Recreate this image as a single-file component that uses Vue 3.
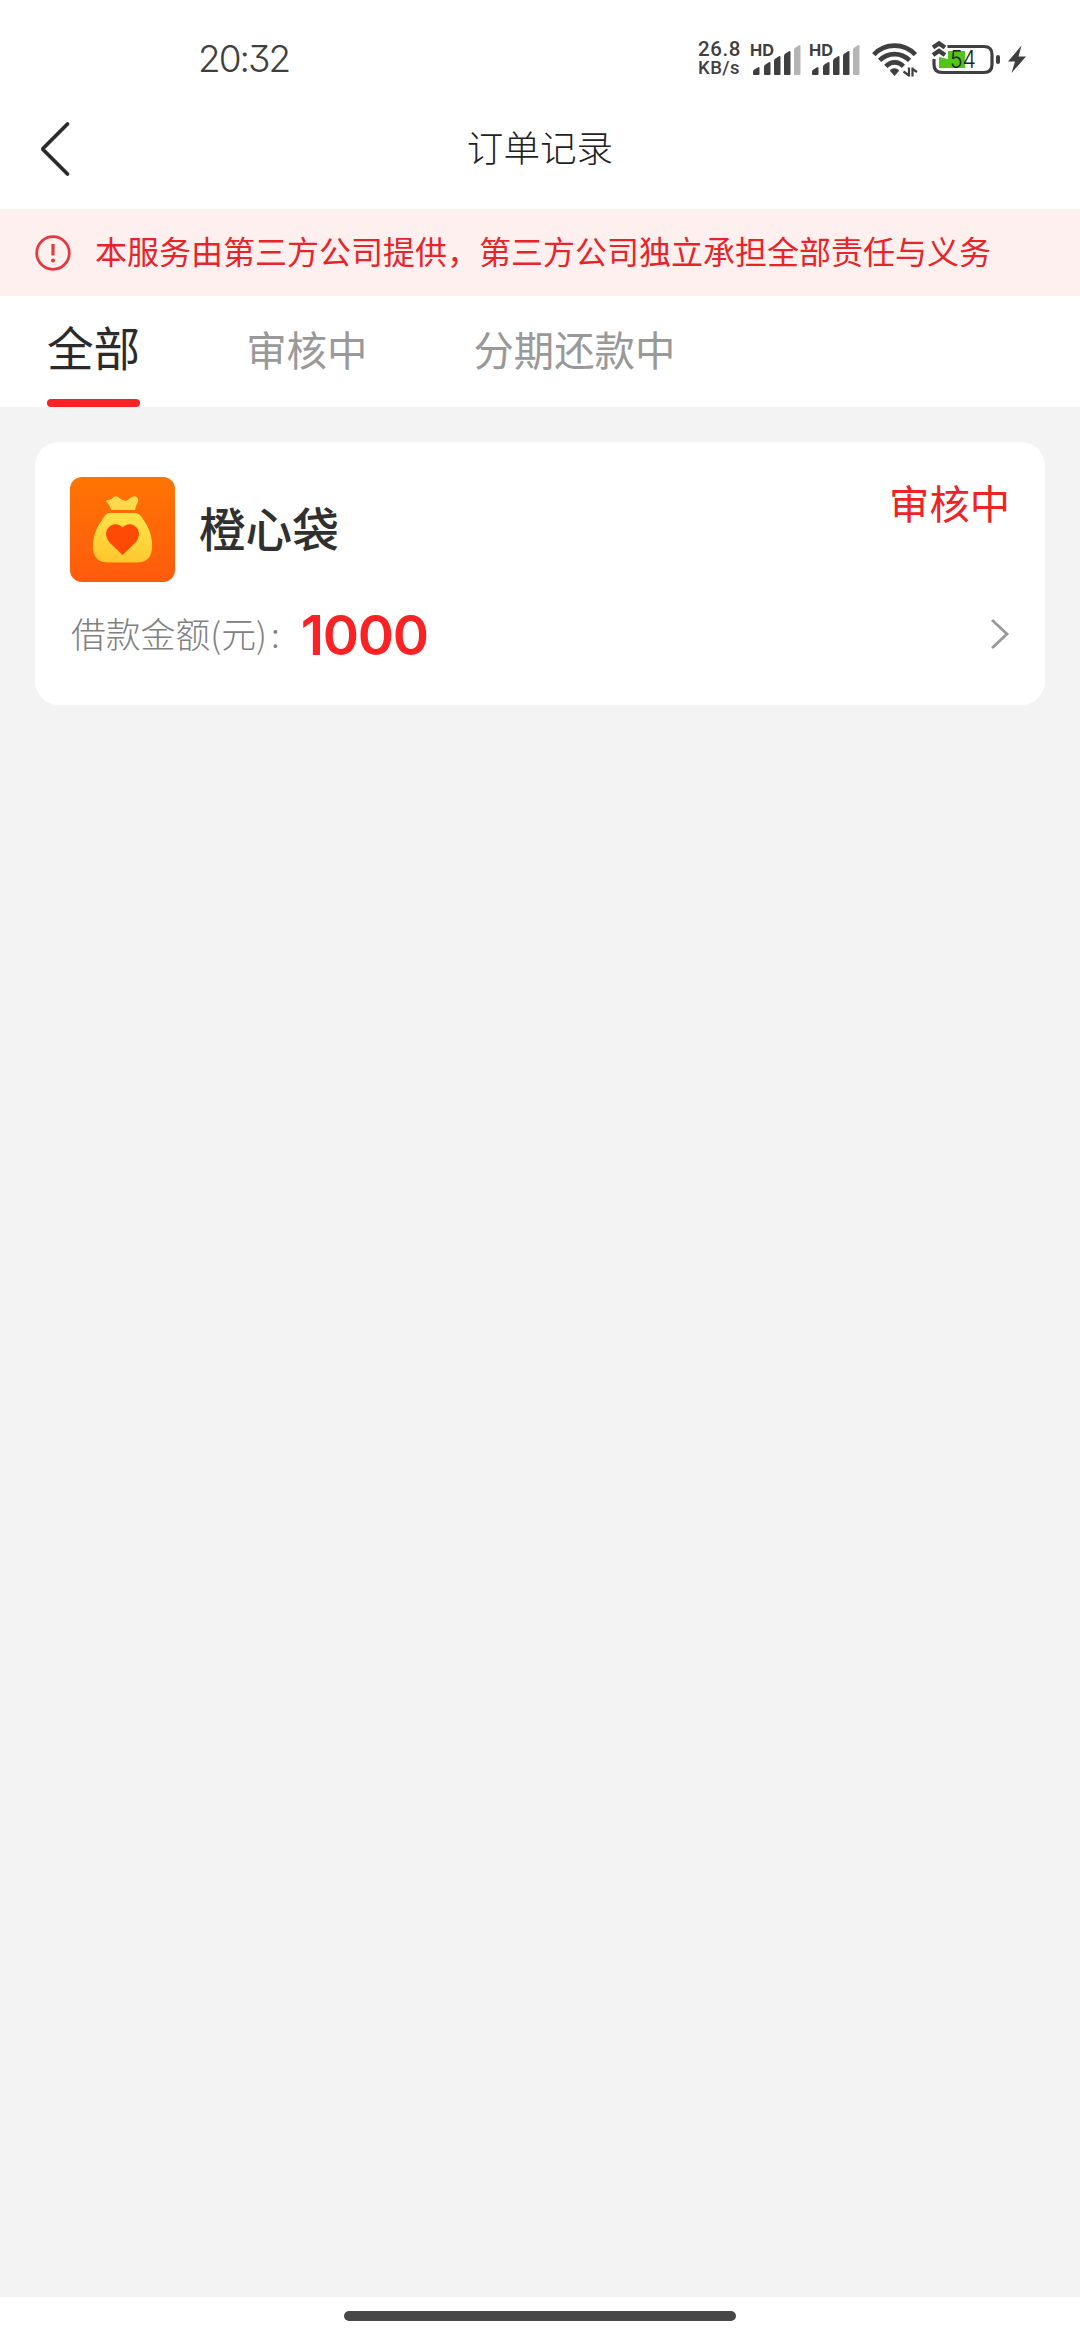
<script setup>
import { ref } from 'vue'

const tabs = ['全部', '审核中', '分期还款中']
const active = ref(0)

const bars = [
  { x: 2, y: 26, fill: '#3f3f3f' },
  { x: 13, y: 21, fill: '#3f3f3f' },
  { x: 23, y: 15, fill: '#3f3f3f' },
  { x: 33, y: 10, fill: '#3f3f3f' },
  { x: 43, y: 4, fill: '#b4b4b4' },
]

const orders = [{ name: '橙心袋', status: '审核中', amount: 1000 }]
</script>

<template>
  <div class="screen">
    <header class="status-bar">
      <span class="clock">20:32</span>
      <div class="indicators">
        <div class="speed"><span>26.8</span><span class="unit">KB/s</span></div>
        <svg v-for="n in 2" :key="n" class="signal" viewBox="0 0 50 36">
          <text x="-1" y="15" class="hd" textLength="24" lengthAdjust="spacingAndGlyphs">HD</text>
          <path
            v-for="b in bars"
            :key="b.x"
            :d="`M${b.x + 1} 34 h4.5 q1 0 1 -1 V${b.y + 1} q0 -1.6 -1.5 -.8 l-3.5 2.3 q-1.5 1 -1.5 2.2 V33 q0 1 1 1z`"
            :fill="b.fill"
          />
        </svg>
        <svg class="wifi" viewBox="0 0 46 36">
          <g fill="none" stroke="#3f3f3f" stroke-width="4.6">
            <path d="M1.8 13.6 C13 1.6 32 1.6 43.4 13.6" />
            <path d="M7.6 19.4 C16 11 29 11 37.6 19.4" />
            <path d="M13.8 25.4 C19 20 26.5 20 31.4 25.4" />
          </g>
          <path d="M22.5 27.2 q3.5 0 4.6 2.6 l-4.6 5.2 l-4.6 -5.2 q1.1 -2.6 4.6 -2.6z" fill="#3f3f3f" />
          <path d="M37 26.500v9M37 34.500l-5.500 -4M40.500 35.500v-9M40.500 28l4.500 3" stroke="#3f3f3f" stroke-width="2.200" fill="none" />
        </svg>
        <svg class="battery" viewBox="0 0 68 36">
          <path d="M7 16 L16 18 V10 H33 V27 H7z" fill="#52c41a" />
          <path d="M15.5 5.500H52 Q60 5.500 60 13.500V23.500Q60 31.500 52 31.500H10Q2 31.500 2 23.500V18" fill="none" stroke="#3f3f3f" stroke-width="3.2" />
          <rect x="64" y="14" width="4" height="9" rx="2" fill="#3f3f3f" />
          <path d="M1 6.500 L7 2.500 L13 6.500 M1 14 L7 10 L13 14" fill="none" stroke="#3f3f3f" stroke-width="4.4" />
          <text x="18" y="27" class="level" textLength="26" lengthAdjust="spacingAndGlyphs">54</text>
        </svg>
        <svg class="bolt" viewBox="0 0 20 30">
          <path d="M14.5 1.5 L1 17.5 H8 L4.5 29 L19 12.5 H11.5z" fill="#3f3f3f" />
        </svg>
      </div>
    </header>

    <nav class="title-bar">
      <svg class="back" viewBox="0 0 30 56">
        <path d="M27.5 3 L2.5 28 L27.5 53" fill="none" stroke="#2b2b2b" stroke-width="3.8" stroke-linecap="round" stroke-linejoin="bevel" />
      </svg>
      <h1>订单记录</h1>
    </nav>

    <div class="notice">
      <svg viewBox="0 0 36 36">
        <circle cx="18" cy="18" r="16.3" fill="none" stroke="#e23b3f" stroke-width="2.8" />
        <path d="M18 9v11.500" stroke="#e23b3f" stroke-width="3.2" />
        <circle cx="18" cy="25.5" r="2" fill="#e23b3f" />
      </svg>
      <span>本服务由第三方公司提供，第三方公司独立承担全部责任与义务</span>
    </div>

    <div class="tabs">
      <button
        v-for="(tab, i) in tabs"
        :key="tab"
        class="tab"
        :class="{ active: i === active }"
        @click="active = i"
      >{{ tab }}</button>
    </div>

    <main class="list">
      <article v-for="order in orders" :key="order.name" class="card">
        <div class="card-head">
          <svg class="logo" viewBox="0 0 105 105">
            <defs>
              <linearGradient id="tile" x1="0" y1="0" x2="0" y2="1">
                <stop offset="0" stop-color="#ff7404" />
                <stop offset="1" stop-color="#ff5b0c" />
              </linearGradient>
              <linearGradient id="bag" x1=".6" y1="0" x2=".4" y2="1">
                <stop offset="0" stop-color="#ffe448" />
                <stop offset="1" stop-color="#ffc72e" />
              </linearGradient>
            </defs>
            <rect width="105" height="105" rx="12" fill="url(#tile)" />
            <path d="M36.5 23.2 Q41 23.5 43 20.5 Q46 18 49.5 21 Q54.5 25.5 58.5 22.5 Q62 18 66 19.5 Q69.5 22 67.5 26 Q65.5 29 65 33 H41 Q40 28 36 24.5z" fill="#ffd94a" />
            <path d="M39 36 H66 Q70 37 73 42 Q81 53 82 65 Q83 78 77 82.5 Q74 85.5 66 85.5 H39 Q31 85.5 28 82.5 Q22 78 23 66 Q24 53 33 41.5 Q36 36 39 36z" fill="url(#bag)" />
            <path d="M52.5 78 L40 66 Q34 59 37 52.5 Q41 46.5 47.5 47.5 Q51 48.3 52.5 50.5 Q54 48.3 57.5 47.5 Q64 46.5 68 52.5 Q71 59 65 66z" fill="#ff4a05" />
          </svg>
          <h2>{{ order.name }}</h2>
          <span class="state">{{ order.status }}</span>
        </div>
        <div class="card-row">
          <span class="label">借款金额(元)<i>:</i></span>
          <strong>{{ order.amount }}</strong>
          <svg class="arrow" viewBox="0 0 20 32">
            <path d="M2 2 L17 16 L2 30" fill="none" stroke="#999" stroke-width="2.8" />
          </svg>
        </div>
      </article>
    </main>

    <footer class="gesture"><div class="pill"></div></footer>
  </div>
</template>

<style>
body {
  margin: 0;
  background: #f3f3f3;
}
</style>

<style scoped>
.screen {
  width: 1080px;
  height: 2340px;
  display: flex;
  flex-direction: column;
  overflow: hidden;
  background: #f3f3f3;
  font-family: Inter, "Noto Sans CJK SC", sans-serif;
}
svg {
  display: block;
  flex: none;
  overflow: visible;
}
.status-bar {
  height: 118px;
  box-sizing: border-box;
  display: flex;
  justify-content: space-between;
  padding: 0 53px 0 198px;
  background: #fff;
  color: #3f3f3f;
}
.clock {
  font-size: 37px;
  line-height: 118px;
  font-weight: 300;
  letter-spacing: -2px;
  font-feature-settings: "cv09";
}
.indicators {
  display: flex;
  align-items: center;
}
.speed {
  width: 45px;
  margin-right: 8px;
  display: flex;
  flex-direction: column;
  font-family: Roboto, sans-serif;
  font-size: 20.5px;
  line-height: 19px;
  font-weight: 500;
  letter-spacing: 0.6px;
}
.unit {
  font-size: 18.5px;
  letter-spacing: 0.5px;
}
.signal {
  width: 50px;
  height: 36px;
  margin-right: 9px;
}
.hd {
  font-size: 16.5px;
  font-weight: 700;
  fill: #3f3f3f;
}
.wifi {
  width: 46px;
  height: 36px;
  margin: 0 14px 0 3px;
}
.battery {
  width: 68px;
  height: 36px;
}
.level {
  font-size: 24px;
  font-weight: 300;
  fill: #222;
}
.bolt {
  width: 20px;
  height: 30px;
  margin-left: 7px;
}
.title-bar {
  height: 91px;
  display: grid;
  grid-template-columns: 108px 1fr 108px;
  background: #fff;
}
.back {
  width: 30px;
  height: 56px;
  margin: 3px 0 0 40px;
}
h1 {
  margin: 0;
  text-align: center;
  font-size: 36.6px;
  line-height: 62px;
  font-weight: 300;
  color: #222;
}
.notice {
  height: 87px;
  display: flex;
  align-items: center;
  gap: 24px;
  padding-left: 35px;
  background: #fff0f0;
  color: #e6252b;
  font-size: 32px;
  white-space: nowrap;
}
.notice svg {
  width: 36px;
  height: 36px;
}
.notice span {
  line-height: 60px;
}
.tabs {
  height: 111px;
  display: flex;
  gap: 106px;
  padding-left: 47px;
  background: #fff;
}
.tab {
  height: 111px;
  box-sizing: border-box;
  padding: 0;
  border: 0;
  background: none;
  font: inherit;
  font-size: 40.4px;
  line-height: 112px;
  color: #999;
  display: flex;
  flex-direction: column;
}
.tab.active {
  font-size: 46.6px;
  line-height: 107px;
  color: #2b2b2b;
}
.tab.active::after {
  content: "";
  width: 93px;
  height: 8px;
  margin-top: -4px;
  border-radius: 4px;
  background: #fb2226;
}
.list {
  flex: 1;
  padding: 35px;
}
.card {
  height: 263px;
  box-sizing: border-box;
  padding: 35px;
  border-radius: 24px;
  background: #fff;
}
.card-head {
  height: 105px;
  display: flex;
}
.logo {
  width: 105px;
  height: 105px;
}
h2 {
  flex: 1;
  margin: 0 0 0 24px;
  font-size: 46.6px;
  line-height: 106px;
  font-weight: 500;
  color: #303030;
}
.state {
  font-size: 40.3px;
  line-height: 56px;
  color: #f02226;
}
.card-row {
  height: 104px;
  display: flex;
  align-items: center;
}
.label {
  margin: -3px 0 0 1px;
  font-family: "Noto Sans CJK SC", sans-serif;
  font-size: 34.8px;
  font-weight: 300;
  color: #808080;
}
.label i {
  font-style: normal;
  margin-left: 4px;
}
strong {
  flex: 1;
  margin: 2px 0 0 21px;
  font-size: 55px;
  font-weight: 600;
  letter-spacing: -1.2px;
  color: #fb2226;
}
.arrow {
  width: 20px;
  height: 32px;
}
.gesture {
  height: 43px;
  display: flex;
  justify-content: center;
  align-items: flex-start;
  background: #fff;
}
.pill {
  width: 392px;
  height: 10px;
  margin-top: 14px;
  border-radius: 5px;
  background: #474747;
}
</style>
